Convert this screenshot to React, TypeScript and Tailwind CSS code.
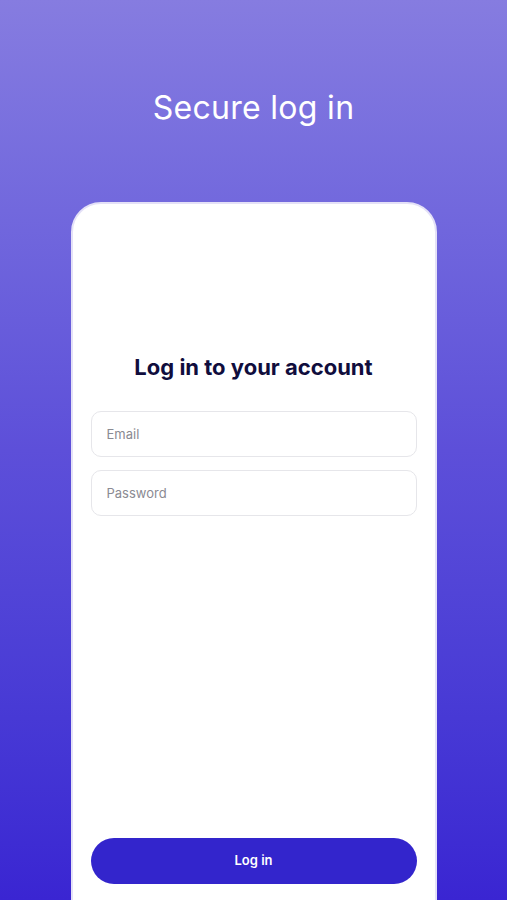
export default function App() {
  return (
    <main
      className="h-[900px] overflow-hidden bg-gradient-to-b from-[#867ce0] via-[#5d4fd9] to-[#3a25d2] flex flex-col items-center"
      style={{ fontFamily: "Inter, 'Noto Sans', sans-serif" }}
    >
      <h1 className="mt-[88px] text-[32px] leading-[40px] font-normal text-white tracking-[0.3px]">
        Secure log in
      </h1>

      <section className="mt-[74px] w-[366px] h-[740px] shrink-0 bg-white rounded-[30px] border-2 border-[#e4e1f7] px-[18px] flex flex-col">
        <h2 className="mt-[148px] text-center text-[22px] leading-[30px] font-bold text-[#100d3d]">
          Log in to your account
        </h2>

        <div className="mt-[29px] flex flex-col gap-[13px]">
          <input
            type="email"
            placeholder="Email"
            className="h-[46px] w-full rounded-[10px] border border-[#e6e6ea] px-[15px] text-[13px] text-gray-800 placeholder:text-[#8a8a92] outline-none"
          />
          <input
            type="password"
            placeholder="Password"
            className="h-[46px] w-full rounded-[10px] border border-[#e6e6ea] px-[15px] text-[13px] text-gray-800 placeholder:text-[#8a8a92] outline-none"
          />
        </div>

        <div className="flex-1" />

        <button
          type="button"
          className="mb-[56px] h-[46px] w-full rounded-full bg-[#3325cc] text-white text-[13px] font-semibold"
        >
          Log in
        </button>
      </section>
    </main>
  );
}
